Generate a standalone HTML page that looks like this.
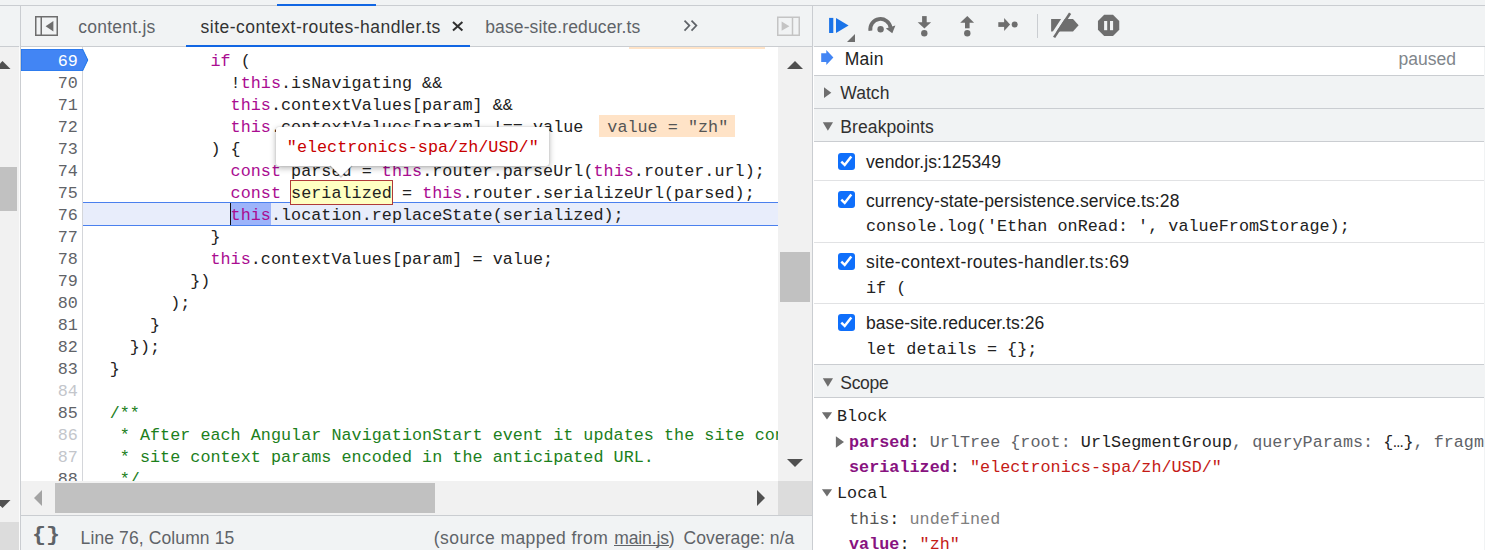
<!DOCTYPE html>
<html><head><meta charset="utf-8"><title>DevTools - Sources</title>
<style>
html,body{margin:0;padding:0;}
body{width:1485px;height:550px;overflow:hidden;position:relative;background:#f1f3f4;font-family:"Liberation Sans",sans-serif;}
div,span,svg{box-sizing:border-box;}
.a{position:absolute;}
.s{position:absolute;height:24px;line-height:24px;white-space:pre;font-family:"Liberation Sans",sans-serif;}
.m{font-family:"Liberation Mono",monospace;font-size:16.75px;letter-spacing:0.027px;white-space:pre;}
.ln{position:absolute;left:21px;width:56.8px;height:22px;line-height:22px;text-align:right;color:#5f6368;}
.ln.d{color:#c3c6cb;}
.cl{position:absolute;left:89.5px;height:22px;line-height:22px;color:#222;}
.k{color:#aa0d91;}
.c{color:#1c801c;}
.hl{background:#f1f3f4;}
.sep{position:absolute;height:1px;background:#cacdd1;}
.sepl{position:absolute;height:1px;background:#e1e2e4;}
.cb{position:absolute;width:17px;height:17px;border-radius:3px;background:#0f6ffb;}
.tr{position:absolute;}
.sc{position:absolute;height:25.6px;line-height:25.6px;}
.n{color:#881280;font-weight:bold;}
.str{color:#c41a16;}
.g{color:#5f6368;}
</style></head><body>

<div class="sep" style="left:0;top:5px;width:1485px"></div>
<div class="a" style="left:277px;top:3.8px;width:99px;height:2.2px;background:#1166e3"></div>
<div class="a" style="left:0;top:47px;width:19px;height:503px;background:#f1f1f1"></div>
<div class="a" style="left:19px;top:47px;width:1px;height:503px;background:#fbfbfb"></div>
<div class="sep" style="left:0;top:46px;width:19px"></div>
<div class="a" style="left:0;top:167px;width:17px;height:44px;background:#c1c1c1"></div>
<div class="a" style="left:0;top:522px;width:19px;height:28px;background:#dcdcdc"></div>
<svg class="a" style="left:0;top:58px" width="14" height="14" viewBox="0 0 14 14"><polygon points="-5.5,11 2.5,3 10.5,11" fill="#505050"/></svg>
<svg class="a" style="left:0;top:496px" width="14" height="16" viewBox="0 0 14 16"><polygon points="-5.5,4 10.5,4 2.5,12" fill="#505050"/></svg>
<div class="a" style="left:20px;top:6px;width:1px;height:544px;background:#cacdd1"></div>
<div class="sep" style="left:21px;top:46px;width:791px"></div>
<svg class="a" style="left:33px;top:14px" width="28" height="24" viewBox="0 0 28 24"><rect x="2.75" y="2.75" width="21.5" height="18.5" fill="none" stroke="#6e6e6e" stroke-width="1.5"/><line x1="8.25" y1="2" x2="8.25" y2="22" stroke="#6e6e6e" stroke-width="1.5"/><polygon points="20.4,7 20.4,17.4 12.6,12.2" fill="#6e6e6e"/></svg>
<div class="s" style="left:78.3px;top:14.5px;font-size:17.5px;letter-spacing:0.229px;color:#5f6368;">content.js</div>
<div class="s" style="left:200.6px;top:14.5px;font-size:17.5px;letter-spacing:0.484px;color:#333;">site-context-routes-handler.ts</div>
<svg class="a" style="left:450px;top:19px" width="16" height="16" viewBox="0 0 16 16"><path d="M3 3 L12.4 11.6 M12.4 3 L3 11.6" stroke="#303030" stroke-width="2" fill="none"/></svg>
<div class="a" style="left:186px;top:44.6px;width:284px;height:2.4px;background:#1166e3"></div>
<div class="s" style="left:485.2px;top:14.5px;font-size:17.5px;letter-spacing:0.124px;color:#5f6368;">base-site.reducer.ts</div>
<svg class="a" style="left:682px;top:18px" width="18" height="16" viewBox="0 0 18 16"><path d="M2.5 2.6 L7.4 7.6 L2.5 12.6 M9.5 2.6 L14.4 7.6 L9.5 12.6" stroke="#5f6368" stroke-width="1.7" fill="none"/></svg>
<svg class="a" style="left:775px;top:14px" width="28" height="24" viewBox="0 0 28 24"><rect x="2.75" y="3.25" width="21.5" height="18" fill="none" stroke="#c4c4c4" stroke-width="1.5"/><line x1="17.5" y1="3" x2="17.5" y2="21" stroke="#c4c4c4" stroke-width="1.5"/><polygon points="6.6,7.6 6.6,16.8 14.4,12.2" fill="#c4c4c4"/></svg>
<div class="a" style="left:21px;top:47px;width:757px;height:434px;background:#fff;overflow:hidden">
</div>
<div class="a m" style="left:0;top:0;width:778px;height:481px;overflow:hidden;clip-path:inset(47px 0 0 21px)">
<div class="a" style="left:82px;top:47px;width:1px;height:434px;background:#d4d6da"></div>
<div class="a" style="left:83px;top:202px;width:695px;height:24px;background:#e8edfb;border-top:1px solid #4a80ee;border-bottom:1px solid #4a80ee"></div>
<div class="a" style="left:231px;top:203px;width:40px;height:22px;background:#9db4fa"></div>
<div class="a" style="left:229.6px;top:203px;width:1.6px;height:22px;background:#111"></div>
<svg class="a" style="left:21px;top:49px" width="70" height="22" viewBox="0 0 70 22"><polygon points="0,0 61.5,0 66.8,11 61.5,22 0,22" fill="#4285f4"/><polygon points="0,0 61.5,0 66.8,11 61.5,22 0,22" fill="none" stroke="#1a73e8" stroke-width="1"/></svg>
<div class="a" style="left:290px;top:180px;width:103px;height:24.5px;background:#ffffc2;border:1px solid #b03a3a"></div>
<div class="a" style="left:629px;top:27px;width:136px;height:22px;background:#ffe3c7"></div>
<div class="a" style="left:599px;top:115px;width:136px;height:21.5px;line-height:25.5px;background:#ffe3c7;color:#555;overflow:hidden;padding-left:8.299px">value = "zh"</div>
<div class="ln" style="top:29px">68</div>
<div class="cl" style="top:29px">          service.getActive().subscribe((value) =&gt; {</div>
<div class="ln" style="top:51px;color:#fff">69</div>
<div class="cl" style="top:51px">            <span class="k">if</span> (</div>
<div class="ln" style="top:73px">70</div>
<div class="cl" style="top:73px">              !<span class="k">this</span>.isNavigating &amp;&amp;</div>
<div class="ln" style="top:95px">71</div>
<div class="cl" style="top:95px">              <span class="k">this</span>.contextValues[param] &amp;&amp;</div>
<div class="ln" style="top:117px">72</div>
<div class="cl" style="top:117px">              <span class="k">this</span>.contextValues[param] !== value</div>
<div class="ln" style="top:139px">73</div>
<div class="cl" style="top:139px">            ) {</div>
<div class="ln" style="top:161px">74</div>
<div class="cl" style="top:161px">              <span class="k">const</span> parsed = <span class="k">this</span>.router.parseUrl(<span class="k">this</span>.router.url);</div>
<div class="ln" style="top:183px">75</div>
<div class="cl" style="top:183px">              <span class="k">const</span> serialized = <span class="k">this</span>.router.serializeUrl(parsed);</div>
<div class="ln" style="top:205px">76</div>
<div class="cl" style="top:205px">              <span class="k">this</span>.location.replaceState(serialized);</div>
<div class="ln" style="top:227px">77</div>
<div class="cl" style="top:227px">            }</div>
<div class="ln" style="top:249px">78</div>
<div class="cl" style="top:249px">            <span class="k">this</span>.contextValues[param] = value;</div>
<div class="ln" style="top:271px">79</div>
<div class="cl" style="top:271px">          })</div>
<div class="ln" style="top:293px">80</div>
<div class="cl" style="top:293px">        );</div>
<div class="ln" style="top:315px">81</div>
<div class="cl" style="top:315px">      }</div>
<div class="ln" style="top:337px">82</div>
<div class="cl" style="top:337px">    });</div>
<div class="ln" style="top:359px">83</div>
<div class="cl" style="top:359px">  }</div>
<div class="ln d" style="top:381px">84</div>
<div class="cl" style="top:381px"></div>
<div class="ln" style="top:403px">85</div>
<div class="cl" style="top:403px">  <span class="c">/**</span></div>
<div class="ln d" style="top:425px">86</div>
<div class="cl" style="top:425px">  <span class="c"> * After each Angular NavigationStart event it updates the site context state based on</span></div>
<div class="ln d" style="top:447px">87</div>
<div class="cl" style="top:447px">  <span class="c"> * site context params encoded in the anticipated URL.</span></div>
<div class="ln" style="top:469px">88</div>
<div class="cl" style="top:469px">  <span class="c"> */</span></div>
</div>
<div class="a" style="left:276px;top:127px;width:273px;height:39px;background:#fff;border-radius:3px;box-shadow:0 2px 6px rgba(0,0,0,.3),0 0 2px rgba(0,0,0,.14)"></div>
<svg class="a" style="left:326px;top:165px" width="30" height="14" viewBox="0 0 30 14"><polygon points="3.5,0 26.5,0 15,11.5" fill="#fff"/><path d="M4 1 L15 12 L26 1" fill="none" stroke="rgba(0,0,0,.2)" stroke-width="1.4"/></svg>
<div class="a m" style="color:#c80000;left:286.8px;top:137.4px;height:22px;line-height:22px">"electronics-spa/zh/USD/"</div>
<div class="a" style="left:778px;top:47px;width:34px;height:434px;background:#f1f1f1"></div>
<div class="a" style="left:780px;top:252px;width:30px;height:50px;background:#c1c1c1"></div>
<svg class="a" style="left:785px;top:59px" width="20" height="12" viewBox="0 0 20 12"><polygon points="2,10 18,10 10,2" fill="#505050"/></svg>
<svg class="a" style="left:785px;top:457px" width="20" height="12" viewBox="0 0 20 12"><polygon points="2,2 18,2 10,10" fill="#505050"/></svg>
<div class="a" style="left:21px;top:481px;width:757px;height:34px;background:#f1f1f1"></div>
<div class="a" style="left:778px;top:481px;width:34px;height:34px;background:#dcdcdc"></div>
<div class="a" style="left:55px;top:483px;width:380px;height:30px;background:#c1c1c1"></div>
<svg class="a" style="left:32px;top:488px" width="12" height="20" viewBox="0 0 12 20"><polygon points="10,2 10,18 2,10" fill="#a3a3a3"/></svg>
<svg class="a" style="left:755px;top:488px" width="12" height="20" viewBox="0 0 12 20"><polygon points="2,2 2,18 10,10" fill="#505050"/></svg>
<div class="sep" style="left:21px;top:515px;width:791px"></div>
<div class="a" style="left:32.2px;top:522.7px;width:28px;height:26px;font:bold 19.5px/26px 'Liberation Mono',monospace;letter-spacing:-0.12px;color:#5f6368;white-space:pre;transform:scaleX(1.2);transform-origin:0 0">{}</div>
<div class="s" style="left:80.6px;top:525.8px;font-size:17.5px;letter-spacing:0.112px;color:#5f6368;">Line 76, Column 15</div>
<div class="s" style="left:433.8px;top:525.8px;font-size:17.5px;letter-spacing:0.425px;color:#5f6368;">(source mapped from</div>
<div class="s" style="left:614.2px;top:525.8px;font-size:17.5px;letter-spacing:-0.121px;color:#5f6368;">main.js)</div>
<div class="a" style="left:614px;top:545.2px;width:55px;height:1.2px;background:#5f6368"></div>
<div class="s" style="left:683.6px;top:525.8px;font-size:17.5px;letter-spacing:0.066px;color:#5f6368;">Coverage: n/a</div>
<div class="a" style="left:812px;top:6px;width:1px;height:544px;background:#cacdd1"></div>
<div class="a" style="left:813px;top:47px;width:671px;height:503px;background:#fff"></div>
<div class="sep" style="left:814px;top:46px;width:671px"></div>
<svg class="a" style="left:820px;top:8px" width="320" height="38" viewBox="0 0 320 38">
<rect x="9.1" y="9.9" width="4.2" height="15.1" fill="#1a73e8"/>
<polygon points="16,9.9 28.6,17.45 16,25" fill="#1a73e8"/>
<polygon points="35,26 35,33.9 27,33.9" fill="#6e6e6e"/>
<path d="M50.4 22.8 A10.2 10.2 0 0 1 70.6 19.6" fill="none" stroke="#6e6e6e" stroke-width="3.8"/>
<polygon points="75.4,17.6 72.3,25.2 65.8,20.6" fill="#6e6e6e"/>
<circle cx="60.6" cy="21.2" r="3.2" fill="#6e6e6e"/>
<rect x="102.1" y="8.1" width="4.6" height="7" fill="#6e6e6e"/>
<polygon points="97.7,14.3 111.1,14.3 104.4,20.4" fill="#6e6e6e"/>
<circle cx="104.3" cy="25.2" r="3.2" fill="#6e6e6e"/>
<rect x="145" y="14" width="4.6" height="6.3" fill="#6e6e6e"/>
<polygon points="140.2,14.8 154.1,14.8 147.3,8" fill="#6e6e6e"/>
<circle cx="147.3" cy="25.2" r="3.2" fill="#6e6e6e"/>
<rect x="178.3" y="14.2" width="7" height="4.7" fill="#6e6e6e"/>
<polygon points="184.1,9.9 190.1,16.5 184.1,23.1" fill="#6e6e6e"/>
<circle cx="194.7" cy="16.5" r="3" fill="#6e6e6e"/>
<line x1="217.5" y1="6" x2="217.5" y2="30" stroke="#cacdd1" stroke-width="1"/>
<polygon points="231.1,11.1 253,11.1 258.6,17.3 253,23.6 231.1,23.6" fill="#6e6e6e"/>
<line x1="231.3" y1="28.6" x2="247.3" y2="4.4" stroke="#f1f3f4" stroke-width="3"/>
<line x1="234.1" y1="29.4" x2="250.1" y2="5.2" stroke="#6e6e6e" stroke-width="2.6"/>
<polygon points="284.19,6.75 293.01,6.75 299.25,12.99 299.25,21.81 293.01,28.05 284.19,28.05 277.95,21.81 277.95,12.99" fill="#6e6e6e"/>
<rect x="284.1" y="13" width="3.1" height="9.2" fill="#f1f3f4"/>
<rect x="290" y="13" width="3.1" height="9.2" fill="#f1f3f4"/>
</svg>
<svg class="a" style="left:819px;top:48px" width="18" height="18" viewBox="0 0 18 18"><polygon points="2.2,5.3 7.3,5.3 7.3,2.1 14.4,9.6 7.3,17.1 7.3,13.9 2.2,13.9" fill="#4285f4"/></svg>
<div class="s" style="left:844.7px;top:46.5px;font-size:17.5px;letter-spacing:0.266px;color:#222;">Main</div>
<div class="s" style="left:1398.6px;top:46.5px;font-size:17.5px;letter-spacing:-0.004px;color:#80868b;">paused</div>
<div class="sep" style="left:814px;top:75px;width:670px"></div>
<div class="a" style="left:814px;top:76px;width:670px;height:32px;background:#f1f3f4"></div>
<svg class="a" style="left:822px;top:85px" width="12" height="16" viewBox="0 0 12 16"><polygon points="2,2.3 9.3,7.7 2,13.1" fill="#6e6e6e"/></svg>
<div class="s" style="left:840.3px;top:80.8px;font-size:17.5px;letter-spacing:0.029px;color:#303030;">Watch</div>
<div class="sep" style="left:814px;top:108px;width:670px"></div>
<div class="a" style="left:814px;top:109px;width:670px;height:32px;background:#f1f3f4"></div>
<svg class="a" style="left:820px;top:119px" width="16" height="14" viewBox="0 0 16 14"><polygon points="2.8,3.2 13,3.2 7.9,11.8" fill="#6e6e6e"/></svg>
<div class="s" style="left:840.3px;top:115.4px;font-size:17.5px;letter-spacing:0.098px;color:#303030;">Breakpoints</div>
<div class="sep" style="left:814px;top:141px;width:670px"></div>
<div class="cb" style="left:838px;top:153px"><svg width="17" height="17" viewBox="0 0 17 17" style="display:block"><path d="M3.3 8.7 L6.7 12 L13.3 3.6" fill="none" stroke="#fff" stroke-width="2.5"/></svg></div>
<div class="s" style="left:866px;top:150px;font-size:17.5px;letter-spacing:0.105px;color:#222;">vendor.js:125349</div>
<div class="sepl" style="left:814px;top:180px;width:670px"></div>
<div class="cb" style="left:838px;top:191px"><svg width="17" height="17" viewBox="0 0 17 17" style="display:block"><path d="M3.3 8.7 L6.7 12 L13.3 3.6" fill="none" stroke="#fff" stroke-width="2.5"/></svg></div>
<div class="s" style="left:866px;top:189px;font-size:17.5px;letter-spacing:0.105px;color:#222;">currency-state-persistence.service.ts:28</div>
<div class="a m" style="left:866px;top:215.5px;height:22px;line-height:22px;color:#222">console.log('Ethan onRead: ', valueFromStorage);</div>
<div class="sepl" style="left:814px;top:242px;width:670px"></div>
<div class="cb" style="left:838px;top:253px"><svg width="17" height="17" viewBox="0 0 17 17" style="display:block"><path d="M3.3 8.7 L6.7 12 L13.3 3.6" fill="none" stroke="#fff" stroke-width="2.5"/></svg></div>
<div class="s" style="left:866px;top:250px;font-size:17.5px;letter-spacing:0.409px;color:#222;">site-context-routes-handler.ts:69</div>
<div class="a m" style="left:866px;top:277.5px;height:22px;line-height:22px;color:#222">if (</div>
<div class="sepl" style="left:814px;top:303px;width:670px"></div>
<div class="cb" style="left:838px;top:314px"><svg width="17" height="17" viewBox="0 0 17 17" style="display:block"><path d="M3.3 8.7 L6.7 12 L13.3 3.6" fill="none" stroke="#fff" stroke-width="2.5"/></svg></div>
<div class="s" style="left:866px;top:311px;font-size:17.5px;letter-spacing:0.054px;color:#222;">base-site.reducer.ts:26</div>
<div class="a m" style="left:866px;top:338.5px;height:22px;line-height:22px;color:#222">let details = {};</div>
<div class="sep" style="left:814px;top:364px;width:670px"></div>
<div class="a" style="left:814px;top:365px;width:670px;height:32px;background:#f1f3f4"></div>
<svg class="a" style="left:820px;top:375px" width="16" height="14" viewBox="0 0 16 14"><polygon points="2.8,3.2 13,3.2 7.9,11.8" fill="#6e6e6e"/></svg>
<div class="s" style="left:840.3px;top:370.5px;font-size:17.5px;letter-spacing:-0.305px;color:#303030;">Scope</div>
<div class="sep" style="left:814px;top:397px;width:670px"></div>
<div class="a m" style="left:813px;top:398px;width:671px;height:152px;overflow:hidden">
<div class="sc" style="left:24px;top:6.199px"><span style="color:#222">Block</span></div>
<div class="sc" style="left:36px;top:31.8px"><span class="n">parsed</span><span style="color:#222">: </span><span class="g">UrlTree {root: </span><span style="color:#222">UrlSegmentGroup</span><span class="g">, queryParams: </span><span style="color:#222">{…}</span><span class="g">, fragment: null}</span></div>
<div class="sc" style="left:36px;top:57.399px"><span class="n">serialized</span><span style="color:#222">: </span><span class="str">"electronics-spa/zh/USD/"</span></div>
<div class="sc" style="left:24px;top:83px"><span style="color:#222">Local</span></div>
<div class="sc" style="left:36px;top:108.599px"><span style="color:#555">this</span><span style="color:#222">: </span><span style="color:#808080">undefined</span></div>
<div class="sc" style="left:36px;top:134.2px"><span class="n">value</span><span style="color:#222">: </span><span class="str">"zh"</span></div>
</div>
<svg class="a" style="left:820px;top:409.9px" width="14" height="12" viewBox="0 0 14 12"><polygon points="1.9,2.3 12.1,2.3 7,9.6" fill="#6e6e6e"/></svg>
<svg class="a" style="left:833.5px;top:433.7px" width="12" height="16" viewBox="0 0 12 16"><polygon points="1.9,2.3 10,8 1.9,13.7" fill="#6e6e6e"/></svg>
<svg class="a" style="left:820px;top:486.7px" width="14" height="12" viewBox="0 0 14 12"><polygon points="1.9,2.3 12.1,2.3 7,9.6" fill="#6e6e6e"/></svg>
</body></html>
